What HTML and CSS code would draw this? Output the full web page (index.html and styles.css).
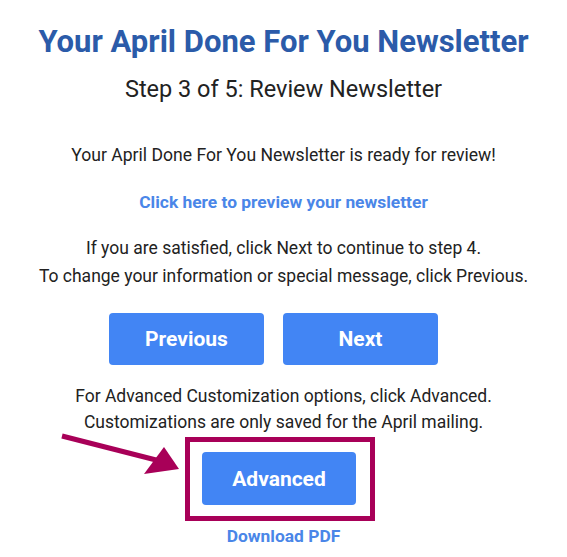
FILE: index.html
```html
<!DOCTYPE html>
<html lang="en">
<head>
    <meta charset="UTF-8">
    <title>Review Newsletter</title>
    <link rel="stylesheet" href="styles.css">
</head>
<body>
    <div class="page">
        <h1 class="title">Your April Done For You Newsletter</h1>
        <h2 class="step">Step 3 of 5: Review Newsletter</h2>
        <p class="ready">Your April Done For You Newsletter is ready for review!</p>
        <a class="link preview" href="#">Click here to preview your newsletter</a>
        <p class="info">If you are satisfied, click Next to continue to step 4.<br>To change your information or special message, click Previous.</p>
        <div class="nav">
            <button class="btn">Previous</button>
            <button class="btn">Next</button>
        </div>
        <p class="info adv-info">For Advanced Customization options, click Advanced.<br>Customizations are only saved for the April mailing.</p>
        <div class="highlight">
            <svg class="arrow" width="130" height="50" viewBox="0 0 130 50">
                <line x1="2" y1="6" x2="100" y2="31" stroke="#a80058" stroke-width="5"/>
                <polygon points="104,17 119,39 84,44" fill="#a80058"/>
            </svg>
            <button class="btn">Advanced</button>
        </div>
        <a class="link pdf" href="#">Download PDF</a>
    </div>
</body>
</html>
```

FILE: styles.css
```css
body {
    margin: 0;
    background: #fff;
    font-family: Roboto, "Liberation Sans", sans-serif;
    color: #222;
}
.page {
    width: 567px;
    display: flex;
    flex-direction: column;
    align-items: center;
    text-align: center;
}
.title {
    margin: 24px 0 0;
    font-size: 31px;
    font-weight: 700;
    line-height: 36px;
    color: #2b5ba9;
}
.step {
    margin: 16px 0 0;
    font-size: 23.5px;
    font-weight: 400;
    line-height: 26px;
    color: #222;
}
.ready {
    margin: 42px 0 0;
    font-size: 17.6px;
    line-height: 22px;
}
.link {
    font-size: 17.4px;
    font-weight: 700;
    line-height: 22px;
    color: #4a86e8;
    text-decoration: none;
}
.preview {
    margin-top: 25px;
}
.info {
    margin: 21px 0 0;
    font-size: 17.5px;
    line-height: 28px;
}
.nav {
    display: flex;
    gap: 19px;
    margin: 23px 20px 0 0;
}
.btn {
    width: 155px;
    height: 52px;
    border: none;
    border-radius: 4px;
    background: #4285f4;
    color: #fff;
    font-family: Roboto, "Liberation Sans", sans-serif;
    font-size: 21px;
    font-weight: 700;
    cursor: pointer;
}
.adv-info {
    margin-top: 18px;
    line-height: 26px;
}
.highlight {
    position: relative;
    margin: 2px 7px 0 0;
    padding: 10px 14px 11px 12px;
    border: 5px solid #a80058;
}
.highlight .btn {
    display: block;
    width: 154px;
    height: 53px;
}
.arrow {
    position: absolute;
    left: -130px;
    top: -12px;
}
.pdf {
    margin-top: 4px;
}
```
